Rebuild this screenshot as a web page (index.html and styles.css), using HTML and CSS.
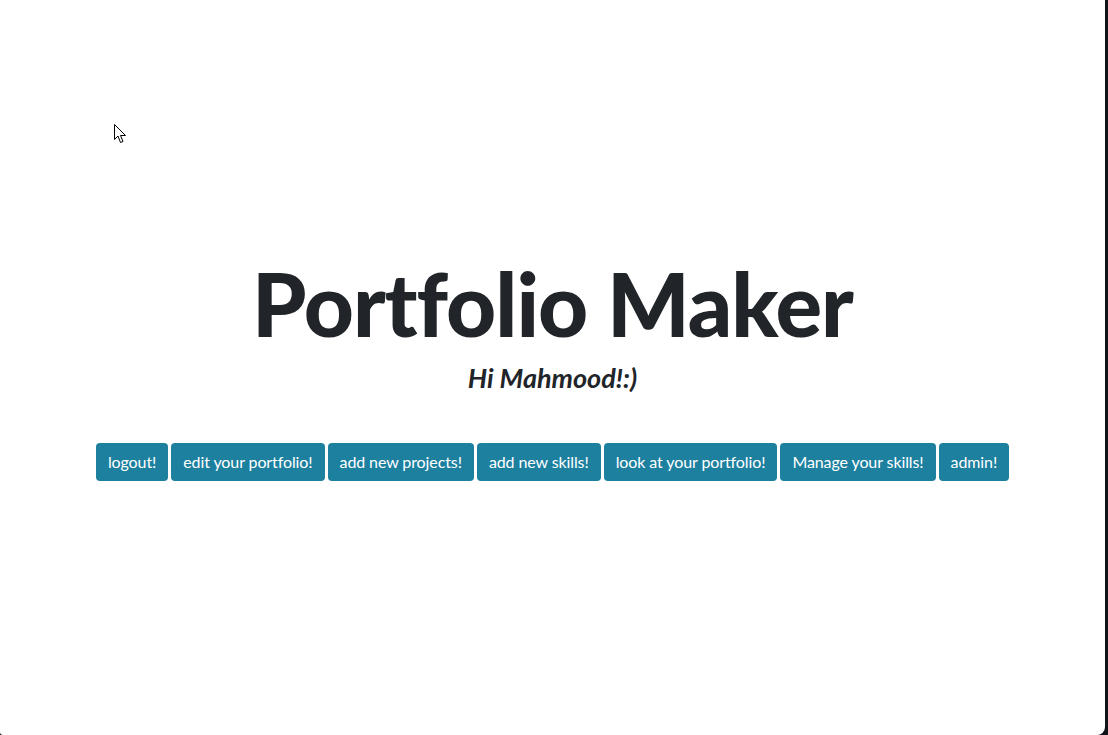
FILE: index.html
```html
<!DOCTYPE html>
<html lang="en">
<head>
<meta charset="utf-8">
<title>Portfolio Maker</title>
<link rel="stylesheet" href="styles.css">
</head>
<body>
<div class="window">
  <main class="masthead">
    <h1 class="title">Portfolio Maker</h1>
    <h3 class="greeting"><em>Hi Mahmood!:)</em></h3>
    <div class="actions">
      <a class="btn" href="#">logout!</a>
      <a class="btn" href="#">edit your portfolio!</a>
      <a class="btn" href="#">add new projects!</a>
      <a class="btn" href="#">add new skills!</a>
      <a class="btn" href="#">look at your portfolio!</a>
      <a class="btn" href="#">Manage your skills!</a>
      <a class="btn" href="#">admin!</a>
    </div>
  </main>
  <svg class="cursor" width="13" height="20" viewBox="0 0 13 20"><path d="M0.5 0.5 L0.5 15.5 L4 12 L6.5 18.5 L9 17.5 L6.5 11.5 L11.5 11.5 Z" fill="#fff" stroke="#000" stroke-width="1" stroke-linejoin="miter"/></svg>
</div>
</body>
</html>
```

FILE: styles.css
```css
html, body {
  margin: 0;
  padding: 0;
}
body {
  background: #12141b;
  width: 1108px;
  height: 735px;
  overflow: hidden;
  font-family: "Lato", "Liberation Sans", sans-serif;
  color: #212529;
}
.window {
  position: relative;
  width: 1105px;
  height: 735px;
  background: #fff;
  border-radius: 0 0 8px 3px;
  display: flex;
  flex-direction: column;
  align-items: center;
}
.masthead {
  padding-top: 256px;
  display: flex;
  flex-direction: column;
  align-items: center;
  width: 100%;
}
.title {
  margin: 0;
  font-size: 87px;
  font-weight: 900;
  line-height: 1.1;
  letter-spacing: -1px;
}
.greeting {
  margin: 10px 0 0;
  font-size: 27px;
  font-weight: 700;
  line-height: 1.2;
}
.actions {
  margin-top: 49px;
  text-align: center;
  font-size: 0;
}
.btn {
  display: inline-block;
  margin: 0 1.5px;
  padding: 0 12px;
  height: 38px;
  line-height: 38px;
  font-size: 16px;
  letter-spacing: -0.1px;
  color: #fff;
  background: #1d809f;
  border-radius: 4px;
  text-decoration: none;
}
.cursor {
  position: absolute;
  left: 114px;
  top: 124px;
}
```
